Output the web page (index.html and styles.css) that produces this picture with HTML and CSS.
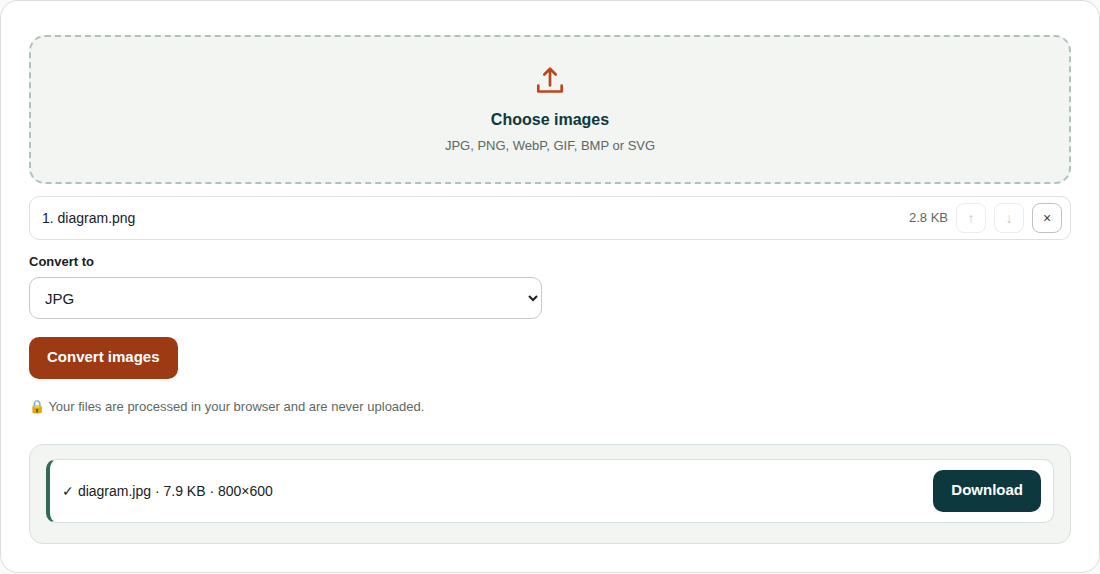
FILE: index.html
```html
<!DOCTYPE html>
<html lang="en">
<head>
<meta charset="utf-8">
<meta name="viewport" content="width=device-width, initial-scale=1">
<title>Image converter</title>
<link rel="stylesheet" href="styles.css">
</head>
<body>
<main class="card">
  <button class="dropzone" type="button">
    <svg class="upload-icon" viewBox="0 0 32 32" fill="none" stroke="currentColor" stroke-width="2.7" stroke-linecap="round" stroke-linejoin="round" aria-hidden="true">
      <path d="M16 20.500V4M10.300 9.500L16 3.800l5.700 5.700M4.300 20.700v5.800h23.400v-5.800"/>
    </svg>
    <strong class="dropzone-title">Choose images</strong>
    <span class="dropzone-hint">JPG, PNG, WebP, GIF, BMP or SVG</span>
  </button>
  <div class="file-row">
    <span class="file-name">1. diagram.png</span>
    <span class="file-size">2.8 KB</span>
    <button class="icon-button" type="button" aria-label="Move up" disabled>↑</button>
    <button class="icon-button" type="button" aria-label="Move down" disabled>↓</button>
    <button class="icon-button" type="button" aria-label="Remove">×</button>
  </div>
  <div class="field">
    <label class="field-label" for="format">Convert to</label>
    <select class="field-select" id="format">
      <option>JPG</option>
      <option>PNG</option>
      <option>WebP</option>
    </select>
  </div>
  <button class="button button-primary" type="button">Convert images</button>
  <p class="privacy">🔒 Your files are processed in your browser and are never uploaded.</p>
  <section class="results" aria-label="Results">
    <div class="result">
      <span class="result-name">✓ diagram.jpg · 7.9 KB · 800×600</span>
      <a class="button button-dark" href="#" download>Download</a>
    </div>
  </section>
</main>
</body>
</html>
```

FILE: styles.css
```css
* {
  box-sizing: border-box;
}

body {
  margin: 0;
  background: #fafafa;
  color: #17211f;
  font: 15px/24px "Liberation Sans", Arial, sans-serif;
}

.card {
  padding: 34px 28px 28px;
  border: 1px solid #dadedc;
  border-radius: 18px;
  background: #fff;
}

.dropzone {
  display: flex;
  flex-direction: column;
  align-items: center;
  width: 100%;
  padding: 28px 20px 24px;
  border: 2px dashed #afc3bd;
  border-radius: 16px;
  background: #f2f5f2;
  font: inherit;
}

.upload-icon {
  width: 32px;
  height: 32px;
  margin-bottom: 9px;
  color: #b9481c;
}

.dropzone-title {
  color: #0d393e;
  font-size: 16px;
  line-height: 28px;
}

.dropzone-hint {
  color: #5c6865;
  font-size: 13px;
}

.file-row {
  display: flex;
  align-items: center;
  gap: 8px;
  margin-top: 12px;
  padding: 6px 8px 6px 12px;
  border: 1px solid #dde1df;
  border-radius: 10px;
}

.file-name {
  flex: 1;
  font-size: 14px;
}

.file-size {
  color: #5c6865;
  font-size: 13px;
}

.icon-button {
  width: 30px;
  height: 30px;
  padding: 0;
  border: 1px solid #bcc4c1;
  border-radius: 8px;
  background: #fff;
  color: #3c4543;
  font: 14px "Liberation Sans", Arial, sans-serif;
}

.icon-button:disabled {
  opacity: 0.3;
}

.field {
  display: flex;
  flex-direction: column;
  gap: 5px;
  width: calc(50% - 8px);
  margin-top: 12px;
}

.field-label {
  font-size: 13px;
  font-weight: 700;
  line-height: 20px;
}

.field-select {
  height: 42px;
  padding: 0 0 0 11px;
  border: 1px solid #c5cac8;
  border-radius: 10px;
  background: #fff;
  color: #17211f;
  font: inherit;
}

.button {
  display: inline-block;
  padding: 8px 18px 10px;
  border: 0;
  border-radius: 10px;
  color: #fff;
  font: 700 15px/24px "Liberation Sans", Arial, sans-serif;
  text-decoration: none;
}

.button-primary {
  margin-top: 18px;
  background: #9d3a14;
}

.button-dark {
  background: #0d393e;
}

.privacy {
  margin: 16px 0 0;
  color: #5c6865;
  font-size: 13px;
}

.results {
  margin-top: 25px;
  padding: 14px 16px 20px;
  border: 1px solid #dae0dc;
  border-radius: 14px;
  background: #f2f5f2;
}

.result {
  display: flex;
  align-items: center;
  justify-content: space-between;
  gap: 12px;
  padding: 10px 12px;
  border: 1px solid #dae0dc;
  border-left: 4px solid #2f6b55;
  border-radius: 10px;
  background: #fff;
}

.result-name {
  font-size: 14px;
}
```
